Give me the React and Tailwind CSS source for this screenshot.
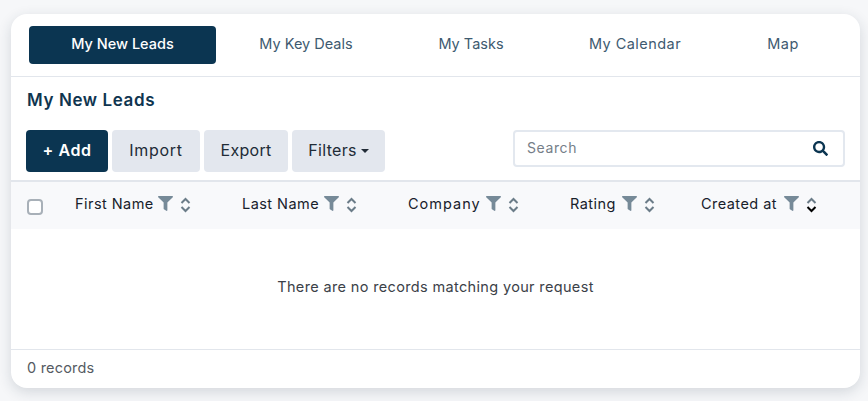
import { FaFilter, FaSearch } from "react-icons/fa";

const TABS = [
  { label: "My New Leads", tracking: "" },
  { label: "My Key Deals", tracking: "" },
  { label: "My Tasks", tracking: "" },
  { label: "My Calendar", tracking: "tracking-[0.45px]" },
  { label: "Map", tracking: "tracking-[0.5px]" },
];

const COLUMNS = [
  { label: "First Name", width: "w-[167px]", labelWidth: "w-[78px]" },
  { label: "Last Name", width: "w-[166px]", labelWidth: "w-[77px]" },
  { label: "Company", width: "w-[162px]", labelWidth: "w-[73px] tracking-[1px]" },
  { label: "Rating", width: "w-[131px]", labelWidth: "w-[47px]" },
  { label: "Created at", width: "w-[120px]", labelWidth: "w-[78px]", sorted: true },
];

function SortIcon({ sorted }) {
  return (
    <svg width="11" height="16" viewBox="0 0 11 16" fill="none" strokeWidth="2" className="ml-[7px] mt-[2px] shrink-0">
      <path d="M1.5 6 5.5 2l4 4" stroke="#6b7c88" />
      <path d="M1.5 10 5.5 14l4-4" stroke={sorted ? "#000000" : "#6b7c88"} />
    </svg>
  );
}

export default function App() {
  return (
    <div className="h-[401px] w-[868px] overflow-hidden bg-[#f6f7f9] pl-[11px] pt-[14px] font-['Inter',sans-serif]">
      <div className="flex h-[374px] w-[849px] flex-col rounded-2xl bg-white shadow-[0_4px_14px_rgba(30,50,70,0.16)]">
        {/* Tabs */}
        <div className="h-[63px] shrink-0 border-b border-[#e2e6ec] pl-[18px] pt-[12px]">
          <div className="grid grid-cols-[187px_180px_150px_178px_118px]">
            {TABS.map((tab, i) => (
              <div
                key={tab.label}
                className={`flex h-[38px] items-center justify-center rounded pb-[3px] text-[14.5px] ${tab.tracking} ${
                  i === 0 ? "bg-[#0b3551] font-medium text-white" : "text-[#3e5a70]"
                }`}
              >
                {tab.label}
              </div>
            ))}
          </div>
        </div>

        <h2 className="ml-4 mt-[11px] text-[17px] font-semibold leading-[24px] tracking-[0.6px] text-[#0f3550]">My New Leads</h2>

        {/* Toolbar */}
        <div className="ml-[15px] mr-[15px] mt-[18px] flex h-[42px] items-start">
          <button className="h-[42px] w-[82px] rounded bg-[#0b3551] pb-[2px] text-[16px] font-semibold tracking-[0.6px] text-white">+ Add</button>
          <button className="ml-1 h-[42px] w-[88px] rounded bg-[#e3e7ee] pb-[2px] text-[16px] tracking-[0.7px] text-[#212b36]">Import</button>
          <button className="ml-1 h-[42px] w-[84px] rounded bg-[#e3e7ee] pb-[2px] text-[16px] tracking-[0.3px] text-[#212b36]">Export</button>
          <button className="ml-1 flex h-[42px] w-[93px] items-center justify-center rounded bg-[#e3e7ee] pb-[2px] text-[16px] tracking-[0.3px] text-[#212b36]">
            Filters
            <span className="ml-[4px] mt-[1px] border-x-[4px] border-t-[4px] border-x-transparent border-t-[#212b36]" />
          </button>
          <div className="ml-auto flex h-[37px] w-[332px] items-center rounded border-2 border-[#e3e8ef] pl-[12px] pr-[15px]">
            <span className="flex-1 pb-[2px] text-[14px] tracking-[0.6px] text-[#757e88]">Search</span>
            <FaSearch size={15} className="text-[#0b3551]" />
          </div>
        </div>

        {/* Table header */}
        <div className="mt-2 flex h-[49px] shrink-0 items-center border-t-2 border-[#e2e6ec] bg-[#f8f9fb] pb-[4px]">
          <span className="ml-4 mr-[32px] mt-[6px] h-4 w-4 shrink-0 rounded-[4px] border-2 border-[#a8b0b8] bg-white" />
          {COLUMNS.map((col) => (
            <div key={col.label} className={`flex shrink-0 items-center ${col.width}`}>
              <span className={`whitespace-nowrap text-[14.5px] tracking-[0.45px] text-[#17212b] ${col.labelWidth}`}>{col.label}</span>
              <FaFilter size={15} className="ml-[5px] text-[#768a98]" />
              <SortIcon sorted={col.sorted} />
            </div>
          ))}
        </div>

        {/* Empty body */}
        <div className="flex flex-1 items-center justify-center pb-[4px] text-[14.5px] tracking-[0.35px] text-[#3b4148]">
          There are no records matching your request
        </div>

        {/* Footer */}
        <div className="flex h-[39px] shrink-0 items-center border-t border-[#e2e6ec] pb-[3px] pl-4 text-[14.5px] tracking-[0.2px] text-[#555b62]">
          0 records
        </div>
      </div>
    </div>
  );
}
